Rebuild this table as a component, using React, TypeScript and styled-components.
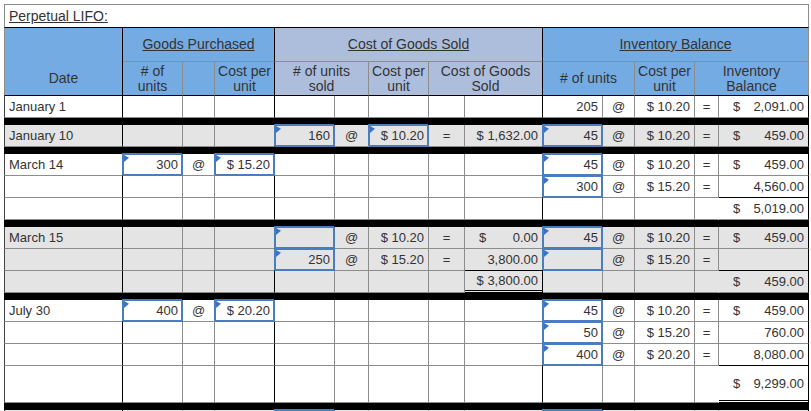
import React from 'react';
import styled, { createGlobalStyle, css } from 'styled-components';

const GRID = '#8c8c8c';
const BLUE = '#4a7dbd';
const FLAG = '#3a73c6';
const INK = '#333333';
const COLS = '119px 60px 32px 60px 60px 34px 60px 36px 78px 60px 32px 60px 24px 90px';

const GlobalStyle = createGlobalStyle`
  html, body { margin: 0; padding: 0; background: #ffffff; overflow: hidden; }
  body { font-family: "Liberation Sans", Arial, sans-serif; color: ${INK}; }
`;

const Page = styled.div`
  box-sizing: border-box;
  height: 411px;
  overflow: hidden;
  padding: 4px 0 0 4px;
`;

const Sheet = styled.div`
  width: 805px;
`;

const Title = styled.div`
  box-sizing: border-box;
  height: 24px;
  display: flex;
  align-items: center;
  padding-left: 4px;
  border: 1px solid ${GRID};
  border-bottom-color: #000;
  font-size: 14px;
`;

const Underlined = styled.span`
  text-decoration: underline;
`;

const Head = styled.div`
  display: grid;
  grid-template-columns: ${COLS};
  grid-template-rows: 34px 34px;
  font-size: 14px;
  line-height: 15px;
`;

type Tone = 'blue' | 'slate';

const HCell = styled.div<{
  $tone: Tone;
  $col: string;
  $row: string;
  $edge?: boolean;
  $base?: boolean;
  $first?: boolean;
  $drop?: boolean;
}>`
  box-sizing: border-box;
  grid-column: ${(p) => p.$col};
  grid-row: ${(p) => p.$row};
  display: flex;
  align-items: center;
  justify-content: center;
  text-align: center;
  padding-top: ${(p) => (p.$drop ? '33px' : '0')};
  background: ${(p) => (p.$tone === 'blue' ? '#75abe3' : '#adbedd')};
  border-right: 1px solid ${(p) => (p.$edge ? '#000' : GRID)};
  border-bottom: 1px solid ${(p) => (p.$base ? '#000' : GRID)};
  ${(p) =>
    p.$first &&
    css`
      border-left: 1px solid ${GRID};
    `}
`;

const Row = styled.div<{ $gray?: boolean; $h?: number }>`
  display: grid;
  grid-template-columns: ${COLS};
  height: ${(p) => p.$h ?? 22}px;
  background: ${(p) => (p.$gray ? '#e4e4e4' : '#ffffff')};
  font-size: 13px;
`;

const Rule = styled.div`
  height: 7px;
  background: #000;
`;

type Align = 'l' | 'c' | 'r';

const Cell = styled.div<{
  $align: Align;
  $edge: boolean;
  $first: boolean;
  $input?: boolean;
  $total?: boolean;
  $dbl?: boolean;
  $open?: boolean;
}>`
  box-sizing: border-box;
  min-width: 0;
  display: flex;
  align-items: center;
  justify-content: ${(p) => (p.$align === 'l' ? 'flex-start' : p.$align === 'c' ? 'center' : 'flex-end')};
  padding: 0 4px;
  white-space: nowrap;
  border-right: 1px solid ${(p) => (p.$open ? 'transparent' : p.$edge ? '#000' : GRID)};
  border-bottom: ${(p) => (p.$dbl ? '3px double #000' : `1px solid ${GRID}`)};
  ${(p) =>
    p.$first &&
    css`
      border-left: 1px solid #444;
    `}
  ${(p) =>
    p.$total &&
    css`
      box-shadow: 0 -1px 0 #000;
    `}
  ${(p) =>
    p.$input &&
    css`
      position: relative;
      border-right-color: ${BLUE};
      border-bottom-color: ${BLUE};
      box-shadow: -1px -1px 0 0 ${BLUE}, inset 0 0 0 1px ${BLUE};
      &::before {
        content: '';
        position: absolute;
        left: 1px;
        top: 1px;
        width: 5px;
        height: 7px;
        background: ${FLAG};
        clip-path: polygon(0 0, 100% 40%, 0 100%);
      }
    `}
`;

const Dollar = styled.span`
  flex: 1;
  padding-left: 10px;
`;

type Spec = string | { v: string; input?: boolean; total?: boolean; dbl?: boolean; open?: boolean };

const I = (v: string): Spec => ({ v, input: true });
const T = (v: string, dbl = false): Spec => ({ v, total: true, dbl });
const O: Spec = { v: '', open: true };
const E = (n: number): Spec[] => Array.from({ length: n }, () => '');

const ALIGN: Align[] = ['l', 'r', 'c', 'r', 'r', 'c', 'r', 'c', 'r', 'r', 'c', 'r', 'c', 'r'];
const EDGES = new Set([0, 3, 8, 13]);

type Line = { sep: true } | { sep?: false; gray?: boolean; h?: number; cells: Spec[] };

const SEP: Line = { sep: true };

const LINES: Line[] = [
  { cells: ['January 1', ...E(8), '205', '@', '$ 10.20', '=', '$|2,091.00'] },
  SEP,
  {
    gray: true,
    cells: ['January 10', '', '', '', I('160'), '@', I('$ 10.20'), '=', '$ 1,632.00', I('45'), '@', '$ 10.20', '=', '$|459.00'],
  },
  SEP,
  { cells: ['March 14', I('300'), '@', I('$ 15.20'), ...E(5), I('45'), '@', '$ 10.20', '=', '$|459.00'] },
  { cells: [...E(9), I('300'), '@', '$ 15.20', '=', '4,560.00'] },
  { cells: [...E(12), O, T('$|5,019.00')] },
  SEP,
  {
    gray: true,
    cells: ['March 15', '', '', '', I(''), '@', '$ 10.20', '=', '$|0.00', I('45'), '@', '$ 10.20', '=', '$|459.00'],
  },
  { gray: true, cells: [...E(4), I('250'), '@', '$ 15.20', '=', '3,800.00', I(''), '@', '$ 15.20', '=', ''] },
  { gray: true, cells: [...E(8), T('$ 3,800.00', true), '', '', '', O, T('$|459.00')] },
  SEP,
  { cells: ['July 30', I('400'), '@', I('$ 20.20'), ...E(5), I('45'), '@', '$ 10.20', '=', '$|459.00'] },
  { cells: [...E(9), I('50'), '@', '$ 15.20', '=', '760.00'] },
  { cells: [...E(9), I('400'), '@', '$ 20.20', '=', '8,080.00'] },
  { h: 37, cells: [...E(12), O, T('$|9,299.00', true)] },
  SEP,
  { gray: true, cells: [...E(4), I(''), ...E(4), I(''), ...E(4)] },
];

function Value({ v }: { v: string }) {
  if (v.includes('|')) {
    const [sym, num] = v.split('|');
    return (
      <>
        <Dollar>{sym}</Dollar>
        <span>{num}</span>
      </>
    );
  }
  return <>{v}</>;
}

function SheetRow({ line }: { line: Extract<Line, { cells: Spec[] }> }) {
  return (
    <Row $gray={line.gray} $h={line.h}>
      {line.cells.map((spec, i) => {
        const s = typeof spec === 'string' ? { v: spec } : spec;
        return (
          <Cell
            key={i}
            $align={ALIGN[i]}
            $edge={EDGES.has(i)}
            $first={i === 0}
            $input={'input' in s ? s.input : false}
            $total={'total' in s ? s.total : false}
            $dbl={'dbl' in s ? s.dbl : false}
            $open={'open' in s ? s.open : false}
          >
            <Value v={s.v} />
          </Cell>
        );
      })}
    </Row>
  );
}

export default function App() {
  return (
    <>
      <GlobalStyle />
      <Page>
        <Sheet>
          <Title>
            <Underlined>Perpetual LIFO:</Underlined>
          </Title>
          <Head>
            <HCell $tone="blue" $col="1" $row="1 / span 2" $drop $base $edge $first>
              Date
            </HCell>
            <HCell $tone="blue" $col="2 / span 3" $row="1" $edge>
              <Underlined>Goods Purchased</Underlined>
            </HCell>
            <HCell $tone="slate" $col="5 / span 5" $row="1" $edge>
              <Underlined>Cost of Goods Sold</Underlined>
            </HCell>
            <HCell $tone="blue" $col="10 / span 5" $row="1">
              <Underlined>Inventory Balance</Underlined>
            </HCell>

            <HCell $tone="blue" $col="2" $row="2" $base>
              # of
              <br />
              units
            </HCell>
            <HCell $tone="blue" $col="3" $row="2" $base />
            <HCell $tone="blue" $col="4" $row="2" $base $edge>
              Cost per
              <br />
              unit
            </HCell>
            <HCell $tone="slate" $col="5 / span 2" $row="2" $base>
              # of units
              <br />
              sold
            </HCell>
            <HCell $tone="slate" $col="7" $row="2" $base>
              Cost per
              <br />
              unit
            </HCell>
            <HCell $tone="slate" $col="8 / span 2" $row="2" $base $edge>
              Cost of Goods
              <br />
              Sold
            </HCell>
            <HCell $tone="blue" $col="10 / span 2" $row="2" $base>
              # of units
            </HCell>
            <HCell $tone="blue" $col="12" $row="2" $base>
              Cost per
              <br />
              unit
            </HCell>
            <HCell $tone="blue" $col="13 / span 2" $row="2" $base>
              Inventory
              <br />
              Balance
            </HCell>
          </Head>
          {LINES.map((line, idx) => (line.sep ? <Rule key={idx} /> : <SheetRow key={idx} line={line} />))}
        </Sheet>
      </Page>
    </>
  );
}
